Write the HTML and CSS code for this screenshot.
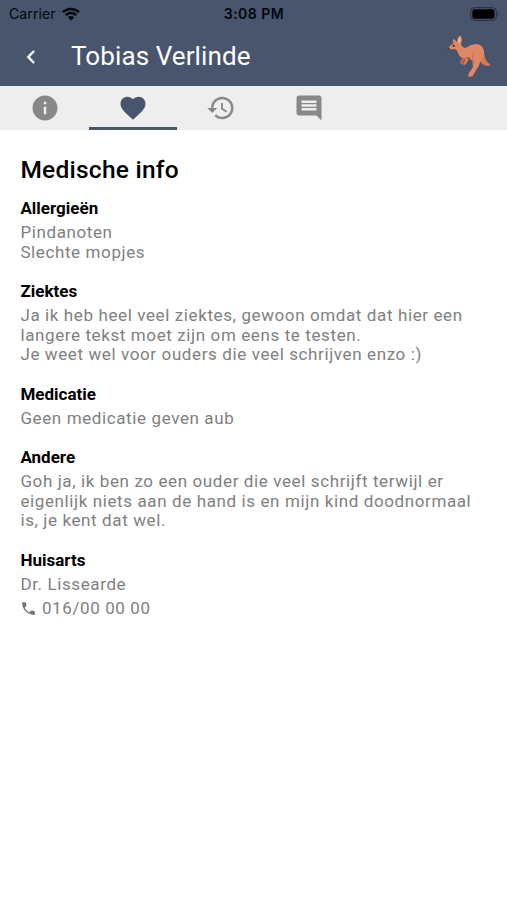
FILE: index.html
```html
<!DOCTYPE html>
<html lang="nl">
<head>
    <meta charset="UTF-8">
    <meta name="viewport" content="width=device-width, initial-scale=1.0">
    <title>Tobias Verlinde</title>
    <link rel="stylesheet" href="styles.css">
</head>
<body>
    <header>
        <div class="status-bar">
            <div class="carrier">
                <span>Carrier</span>
                <svg class="wifi" viewBox="0 0 18 14">
                    <path d="M1 5.2a11.3 11.3 0 0 1 16 0M3.8 8.1a7.4 7.4 0 0 1 10.4 0" fill="none" stroke="#03070e" stroke-width="2.5"/>
                    <path d="M9 13.6 5.9 10.4a4.4 4.4 0 0 1 6.2 0z" fill="#03070e"/>
                </svg>
            </div>
            <span class="time">3:08 PM</span>
            <svg class="battery" viewBox="0 0 30 14">
                <rect x="0.7" y="0.7" width="25.6" height="12.6" rx="3.6" fill="none" stroke="#252d3e" stroke-width="1"/>
                <rect x="2.4" y="2.3" width="22" height="9.4" rx="2" fill="#000"/>
                <path d="M27.6 4.8q1.8 2.2 0 4.4z" fill="#252d3e"/>
            </svg>
        </div>
        <div class="title-bar">
            <svg class="back" viewBox="0 0 10 16">
                <path d="M8 2 2.3 8 8 14" fill="none" stroke="#fff" stroke-width="2.4"/>
            </svg>
            <h1>Tobias Verlinde</h1>
            <svg class="kangaroo" viewBox="0 0 46 46">
                <path d="M35 13c4 5 3 11 5 14 1 2 2 3 4 4 1 1 0 2-2 2-4 0-7-3-10-7z" fill="#d47856"/>
                <path d="M17 23l-3 5 0 3 3 0 1-3 4-3z" fill="#b9654c"/>
                <path d="M7.500 10.500C6.500 8 6.500 6.500 8 6l3.500 3.500C11 6 12 3.500 14 2.500c2.300 2 2.300 5.500 1 8.500 1.200 2.500 2.500 4 4.500 4 3-1.500 6-4 10.500-4 5 0 8 4 8 8.500 0 4-2 6-3.500 8l-1.500 5-2 3-4 7-3 1.500-2-1 1-3 4-6-.5-6c-2-1-3-3-3.500-4l-4 1c-4 0-6-2-7-5-.6-2.500-1.500-3.500-4-4-2 .3-4.500 .4-5.500-.5 0-1.500 2-3.500 4.500-5z" fill="#e08863"/>
                <path d="M20 25l-2 5-1.500 1.500 2 .5 2-1.500 2.500-5z" fill="#d57b5a"/>
                <path d="M11.800 9.500c0-2.500.7-4.500 2-5.500 1 2 .7 4-.5 6z" fill="#f2bda2"/>
                <path d="M27 20c-1 4-1 7 2 11" fill="none" stroke="#c66e51" stroke-width="1"/>
                <circle cx="7.700" cy="12.800" r="1.100" fill="#2d2023"/>
                <circle cx="2.800" cy="15.500" r="1" fill="#533131"/>
            </svg>
        </div>
    </header>
    <nav>
        <a href="#info">
            <svg viewBox="0 0 24 24"><path d="M12 2C6.48 2 2 6.48 2 12s4.48 10 10 10 10-4.48 10-10S17.52 2 12 2zm1 15h-2v-6h2v6zm0-8h-2V7h2v2z"/></svg>
        </a>
        <a href="#medisch" class="active">
            <svg viewBox="0 0 24 24"><path d="M12 21.35l-1.45-1.32C5.4 15.36 2 12.28 2 8.5 2 5.42 4.42 3 7.5 3c1.74 0 3.41.81 4.5 2.09C13.09 3.81 14.76 3 16.5 3 19.58 3 22 5.42 22 8.5c0 3.78-3.4 6.86-8.55 11.54L12 21.35z"/></svg>
        </a>
        <a href="#historiek">
            <svg viewBox="0 0 24 24"><path d="M13 3c-4.97 0-9 4.03-9 9H1l3.89 3.89.07.14L9 12H6c0-3.87 3.13-7 7-7s7 3.13 7 7-3.13 7-7 7c-1.93 0-3.68-.79-4.94-2.06l-1.42 1.42C8.27 19.99 10.51 21 13 21c4.97 0 9-4.03 9-9s-4.03-9-9-9zm-1 5v5l4.28 2.54.72-1.21-3.5-2.08V8H12z"/></svg>
        </a>
        <a href="#opmerkingen">
            <svg viewBox="0 0 24 24"><path d="M21.99 4c0-1.1-.89-2-1.99-2H4c-1.1 0-2 .9-2 2v12c0 1.1.9 2 2 2h14l4 4-.01-18zM18 14H6v-2h12v2zm0-3H6V9h12v2zm0-3H6V6h12v2z"/></svg>
        </a>
    </nav>
    <main>
        <h2>Medische info</h2>
        <section>
            <h3>Allergieën</h3>
            <p>Pindanoten<br>Slechte mopjes</p>
        </section>
        <section>
            <h3>Ziektes</h3>
            <p>Ja ik heb heel veel ziektes, gewoon omdat dat hier een<br>langere tekst moet zijn om eens te testen.<br>Je weet wel voor ouders die veel schrijven enzo :)</p>
        </section>
        <section>
            <h3>Medicatie</h3>
            <p>Geen medicatie geven aub</p>
        </section>
        <section>
            <h3>Andere</h3>
            <p>Goh ja, ik ben zo een ouder die veel schrijft terwijl er<br>eigenlijk niets aan de hand is en mijn kind doodnormaal<br>is, je kent dat wel.</p>
        </section>
        <section>
            <h3>Huisarts</h3>
            <p>Dr. Lissearde</p>
            <p class="phone">
                <svg viewBox="0 0 24 24"><path d="M6.62 10.79c1.44 2.83 3.76 5.14 6.59 6.59l2.2-2.2c.27-.27.67-.36 1.02-.24 1.12.37 2.33.57 3.57.57.55 0 1 .45 1 1V20c0 .55-.45 1-1 1-9.39 0-17-7.61-17-17 0-.55.45-1 1-1h3.5c.55 0 1 .45 1 1 0 1.25.2 2.45.57 3.57.11.35.03.74-.25 1.02l-2.2 2.2z"/></svg>
                <span>016/00 00 00</span>
            </p>
        </section>
    </main>
</body>
</html>
```
FILE: styles.css
```css
body {
    font-family: Roboto, sans-serif;
    margin: 0;
    background-color: #fff;
    color: #000;
}
h1, h2, h3, p {
    margin: 0;
}
svg {
    display: block;
}
header {
    box-sizing: border-box;
    height: 86px;
    background-color: #48556d;
}
.status-bar {
    display: grid;
    grid-template-columns: 1fr auto 1fr;
    align-items: center;
    height: 27px;
    padding: 0 7px 0 9px;
    font-family: Inter, sans-serif;
    font-size: 14px;
    letter-spacing: 0.1px;
    color: #03070e;
}
.carrier {
    display: flex;
    align-items: center;
    gap: 6px;
}
.wifi {
    width: 18px;
    height: 14px;
}
.time {
    margin-right: 1px;
    font-weight: 600;
    letter-spacing: 0.5px;
}
.battery {
    justify-self: end;
    width: 30px;
    height: 14px;
}
.title-bar {
    display: flex;
    align-items: center;
    height: 57px;
    padding: 0 15px 0 26px;
}
.back {
    width: 10px;
    height: 16px;
    margin-top: 2px;
}
h1 {
    flex: 1;
    margin-left: 35px;
    font-size: 26px;
    font-weight: 400;
    letter-spacing: 0.1px;
    color: #fff;
}
.kangaroo {
    width: 46px;
    height: 46px;
}
nav {
    display: flex;
    height: 44px;
    padding-left: 1px;
    background-color: #eee;
}
nav a {
    box-sizing: border-box;
    display: flex;
    justify-content: center;
    width: 88px;
    padding-top: 7px;
    border-bottom: 3px solid transparent;
}
nav a.active {
    border-color: #48556d;
}
nav svg {
    width: 30px;
    height: 30px;
    fill: #888;
}
nav .active svg {
    fill: #48556d;
}
main {
    padding: 25px 20.4px;
}
h2 {
    margin-bottom: 13px;
    font-size: 24.5px;
    font-weight: 500;
    line-height: 30px;
    letter-spacing: 0.25px;
}
section {
    margin-bottom: 18.8px;
}
h3 {
    margin-bottom: 5px;
    font-size: 17px;
    font-weight: 700;
    line-height: 20px;
}
p {
    font-size: 17px;
    line-height: 19.6px;
    letter-spacing: 0.61px;
    color: #808080;
    white-space: nowrap;
}
.phone {
    display: flex;
    align-items: center;
    gap: 4.5px;
    margin-top: 5px;
}
.phone svg {
    width: 17px;
    height: 17px;
    fill: #757575;
}
```
